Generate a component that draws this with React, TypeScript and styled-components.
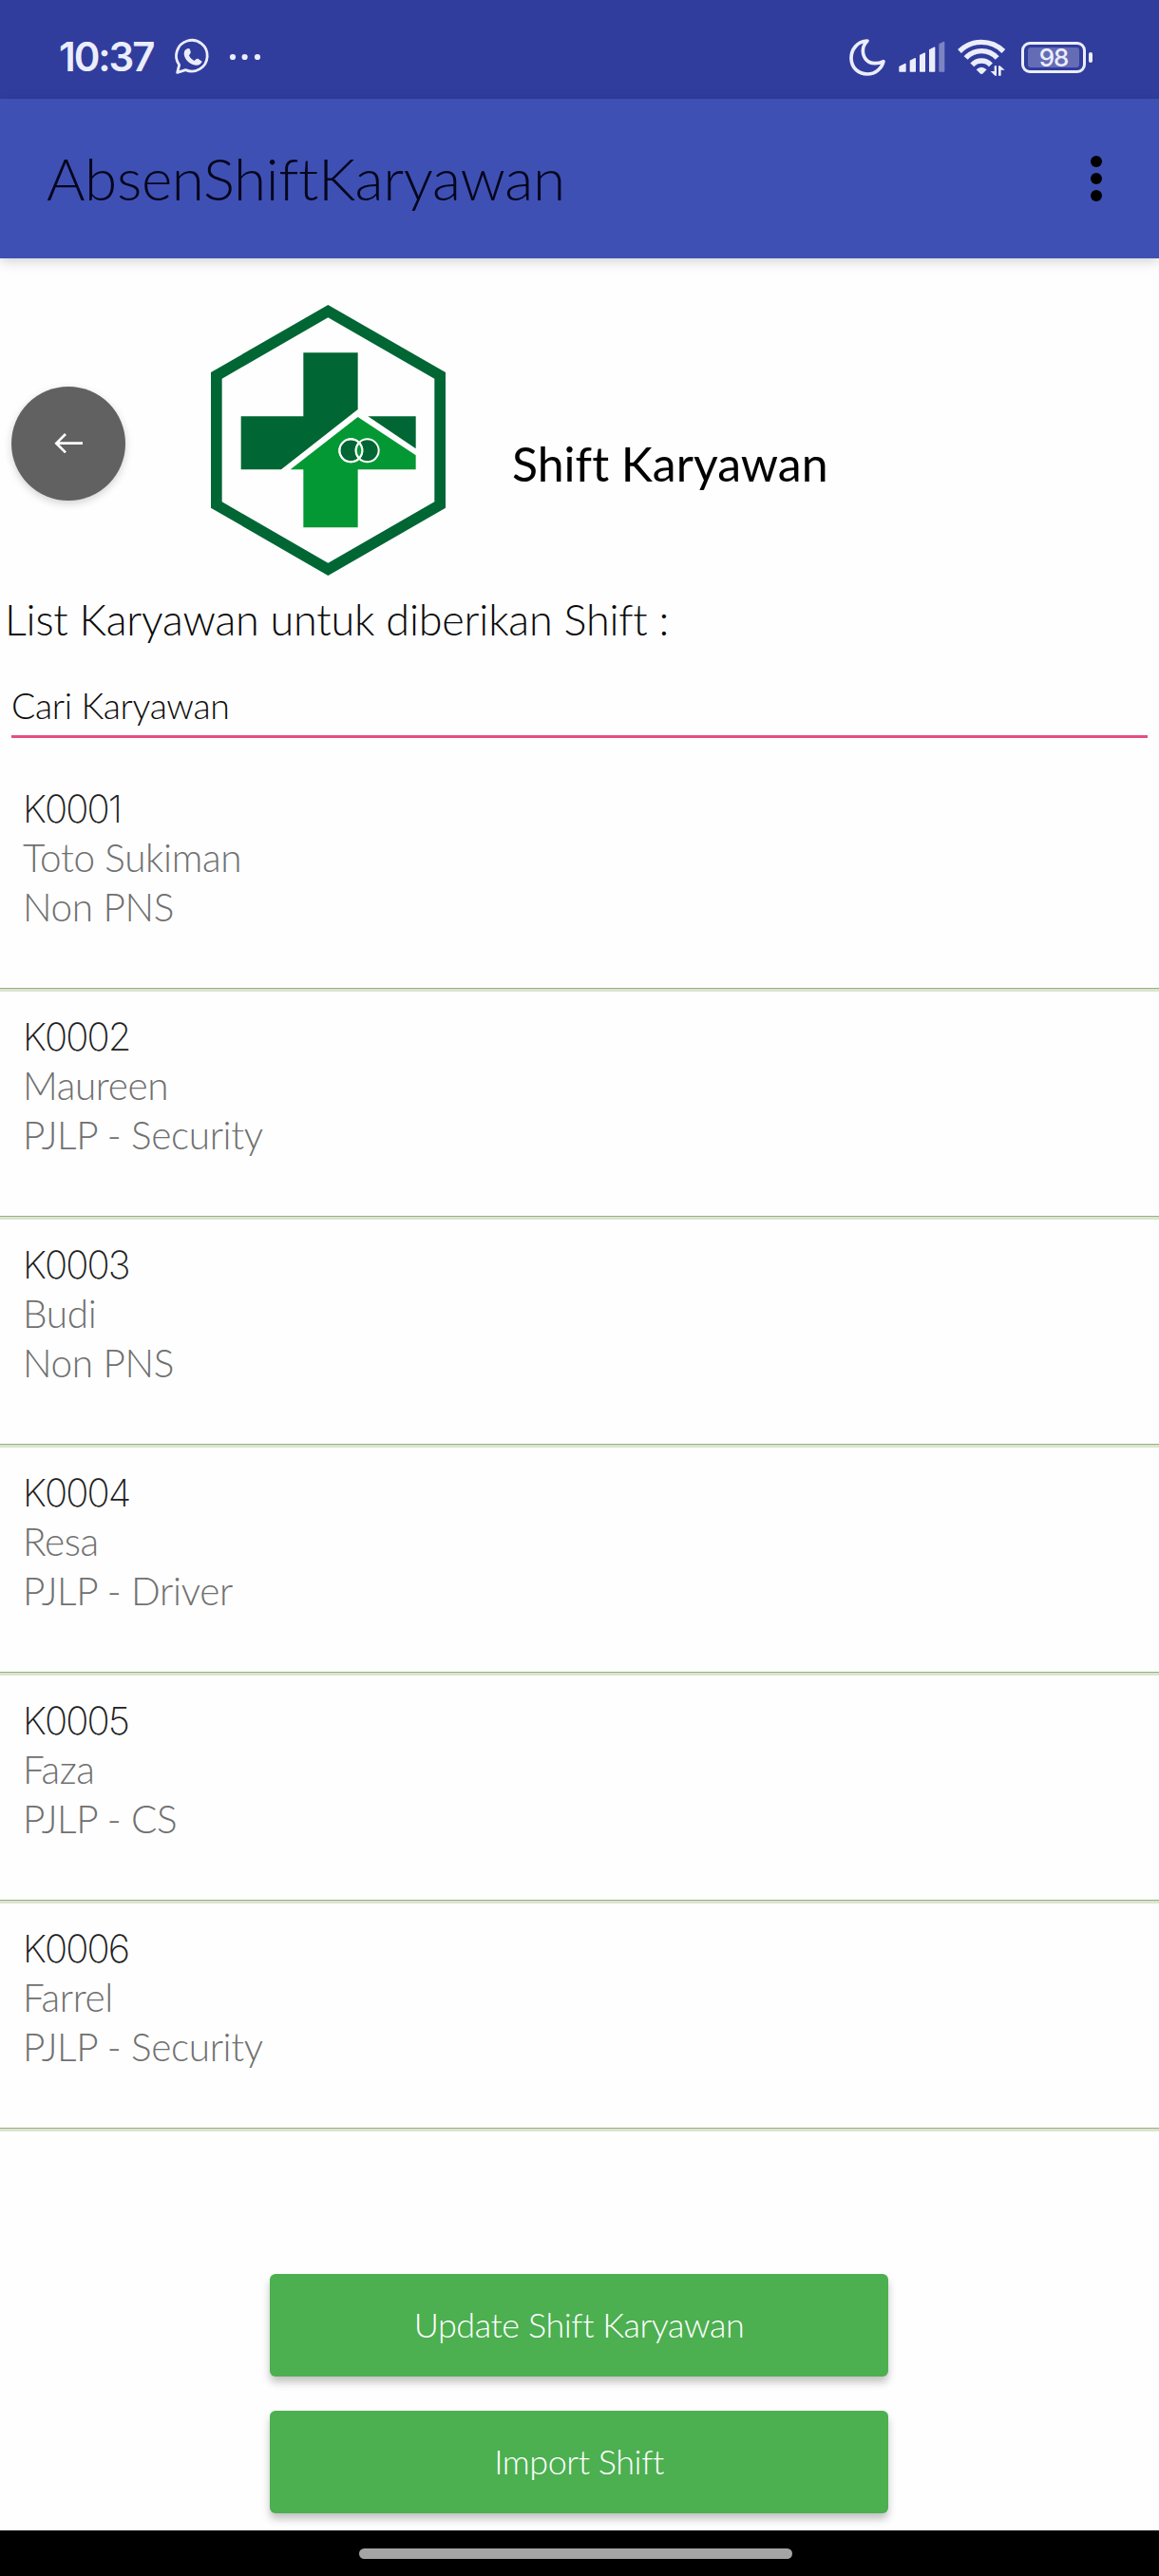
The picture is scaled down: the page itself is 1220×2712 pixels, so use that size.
import React from "react";
import styled, { createGlobalStyle } from "styled-components";

const GlobalStyle = createGlobalStyle`
  *, *::before, *::after { box-sizing: border-box; }
  body {
    margin: 0;
    background: #fefefe;
    font-family: Lato, "Liberation Sans", sans-serif;
    font-variant-ligatures: none;
  }
`;

const Screen = styled.div`
  display: flex;
  flex-direction: column;
  width: 1220px;
  height: 2712px;
  background: #fefefe;
  overflow: hidden;
`;

const StatusBar = styled.header`
  display: flex;
  align-items: center;
  justify-content: space-between;
  flex: none;
  height: 104px;
  padding: 16px 70px 0 62px;
  background: #303d9d;
  color: #ecedfb;
  font-family: Inter, "Liberation Sans", sans-serif;
`;

const StatusGroup = styled.div`
  display: flex;
  align-items: center;
`;

const Clock = styled.span`
  width: 123px;
  font-size: 42px;
  font-weight: 560;
  line-height: 50px;
  letter-spacing: -2.1px;
`;

const Glyph = styled.svg<{ $gap?: number }>`
  display: block;
  flex: none;
  overflow: visible;
  margin-left: ${(p) => p.$gap ?? 0}px;
`;

const Battery = styled.div`
  display: flex;
  align-items: center;
  gap: 3px;
  margin-left: 16px;
`;

const BatteryShell = styled.div`
  display: flex;
  width: 68px;
  height: 33px;
  padding: 3px 4px;
  border: 3px solid #ecedfb;
  border-radius: 9px;
`;

const BatteryLevel = styled.div`
  display: flex;
  align-items: center;
  justify-content: center;
  width: 54px;
  height: 21px;
  border-radius: 3px;
  background: #656cb6;
  font-size: 26px;
  font-weight: 500;
  line-height: 21px;
  letter-spacing: -1px;
`;

const BatteryTip = styled.div`
  width: 4px;
  height: 11px;
  border-radius: 2px;
  background: #ecedfb;
`;

const AppBar = styled.div`
  display: flex;
  align-items: center;
  justify-content: space-between;
  flex: none;
  height: 168px;
  padding: 0 60px 0 49px;
  background: #3f50b4;
  box-shadow: 0 3px 12px rgba(0, 0, 0, 0.18);
`;

const AppTitle = styled.h1`
  margin: 0;
  padding-bottom: 2px;
  color: #04061c;
  font-size: 62px;
  font-weight: 300;
  line-height: 80px;
  letter-spacing: -0.35px;
`;

const Header = styled.section`
  display: flex;
  align-items: center;
  flex: none;
  height: 343px;
  padding: 0 12px;
`;

const BackButton = styled.button`
  display: flex;
  align-items: center;
  justify-content: center;
  width: 120px;
  height: 120px;
  margin: 47px 90px 0 0;
  padding: 0;
  border: 0;
  border-radius: 50%;
  background: #616161;
  box-shadow: 0 3px 8px rgba(0, 0, 0, 0.18);
`;

const LogoFrame = styled.div`
  margin-top: 39px;
`;

const PageTitle = styled.h2`
  margin: 88px 0 0 70px;
  color: #000;
  font-size: 50px;
  font-weight: 400;
  line-height: 60px;
`;

const ListLabel = styled.p`
  flex: none;
  margin: 0;
  padding: 7px 5px;
  height: 81px;
  color: #0a0a0a;
  font-size: 45px;
  font-weight: 300;
  line-height: 60px;
  letter-spacing: -0.2px;
`;

const SearchInput = styled.input`
  flex: none;
  width: 1196px;
  height: 81px;
  margin: 0 12px 27px;
  padding: 14px 0 0;
  border: 0;
  border-bottom: 3px solid #e34f84;
  background: transparent;
  outline: 0;
  color: #0c0c0c;
  font: 300 37.5px/44px Lato, "Liberation Sans", sans-serif;
  letter-spacing: -0.35px;
  &::placeholder {
    color: #0c0c0c;
    opacity: 1;
  }
`;

const List = styled.ul`
  flex: none;
  margin: 0;
  padding: 0;
  list-style: none;
`;

const Item = styled.li`
  display: flex;
  flex-direction: column;
  height: 240px;
  padding: 22px 24px 0;
  border-bottom: 3px solid #dde2d3;
  background: linear-gradient(#93b474, #93b474) bottom / 100% 1px no-repeat padding-box;
`;

const Code = styled.span`
  color: #202020;
  font-family: Inter, "Liberation Sans", sans-serif;
  font-size: 40px;
  font-weight: 250;
  line-height: 51px;
  letter-spacing: -1.9px;
`;

const Detail = styled.span`
  color: #707070;
  font-size: 40.5px;
  font-weight: 300;
  line-height: 52px;
  letter-spacing: -0.35px;
`;

const Actions = styled.div`
  display: flex;
  flex-direction: column;
  align-items: center;
  gap: 36px;
  flex: 1;
  padding: 150px 1px 0 0;
`;

const ActionButton = styled.button`
  width: 651px;
  height: 108px;
  padding: 0 0 2px;
  border: 0;
  border-radius: 6px;
  background: #4caf50;
  box-shadow: 0 6px 8px rgba(0, 0, 0, 0.24);
  color: #fff;
  font: 300 36px/44px Lato, "Liberation Sans", sans-serif;
  letter-spacing: -0.45px;
`;

const NavBar = styled.footer`
  display: flex;
  justify-content: center;
  flex: none;
  height: 48px;
  padding: 19px 8px 0 0;
  background: #000;
  z-index: 1;
`;

const NavPill = styled.div`
  width: 456px;
  height: 11px;
  border-radius: 6px;
  background: #a5a5a5;
`;

const WhatsAppIcon = () => (
  <Glyph width={37} height={38} viewBox="552 125 111 114">
    <path
      d="M557 231 L563 207 A49 49 0 1 1 583 223 Z"
      fill="none"
      stroke="#ecedfb"
      strokeWidth={8.5}
      strokeLinejoin="round"
    />
    <path
      d="M584 158Q578 162 578 172C580 192 600 208 618 208Q630 208 635 196L622 187Q617 186 611 194Q598 188 594 177Q601 171 599 164L595 155Q590 154 584 158Z"
      fill="#ecedfb"
    />
  </Glyph>
);

const MoreNotificationsIcon = () => (
  <Glyph $gap={19} width={34} height={8} viewBox="0 0 34 8">
    {[4, 16.6, 30].map((x) => (
      <circle key={x} cx={x} cy={4} r={3.1} fill="#ecedfb" />
    ))}
  </Glyph>
);

const MoonIcon = () => (
  <Glyph width={38} height={39} viewBox="103 121 114 117">
    <path
      d="M160 127C127 128 109 156 109 181C109 212 132 232 160 232C185 232 206 214 211 192C200 197 190 198 184 198C160 198 146 180 146 158C146 146 151 136 160 127Z"
      fill="none"
      stroke="#ecedfb"
      strokeWidth={11}
      strokeLinejoin="round"
    />
  </Glyph>
);

const bars = [
  { x: 259, w: 22, left: 211, right: 202 },
  { x: 293, w: 19, left: 192, right: 185 },
  { x: 324, w: 18, left: 175, right: 168 },
  { x: 354, w: 19, left: 158, right: 150 },
  { x: 385, w: 18, left: 140, right: 133 },
];

const SignalIcon = () => (
  <Glyph $gap={14} width={49} height={34} viewBox="258 130 147 102">
    {bars.map((b, i) => (
      <path
        key={b.x}
        d={`M${b.x + 2} ${b.left + 1}L${b.x + b.w - 2} ${b.right + 1}V226H${b.x + 2}Z`}
        fill="#ecedfb"
        stroke="#ecedfb"
        strokeWidth={4}
        strokeLinejoin="round"
        opacity={i === 4 ? 0.4 : 1}
      />
    ))}
  </Glyph>
);

const WifiIcon = () => (
  <Glyph $gap={13} width={51} height={39} viewBox="444 122 153 117">
    <g fill="none" stroke="#ecedfb" strokeWidth={16}>
      <path d="M450 161A98 98 0 0 1 589 161" />
      <path d="M470 182A66 66 0 0 1 569 182" />
      <path d="M490 204A40 40 0 0 1 549 204" />
    </g>
    <path d="M503 219Q519 203 536 219L525 230Q519 236 514 230Z" fill="#ecedfb" />
    <path
      d="M560 207H567V238H562L548 224H560ZM573 207H578L593 220H581V238H573Z"
      fill="#ecedfb"
    />
  </Glyph>
);

const OverflowIcon = () => (
  <Glyph width={12} height={48} viewBox="0 0 12 48" fill="#000">
    <circle cx={6} cy={6} r={6} />
    <circle cx={6} cy={24} r={6} />
    <circle cx={6} cy={42} r={6} />
  </Glyph>
);

const ArrowIcon = () => (
  <Glyph width={30} height={22} viewBox="171 469 90 66">
    <path d="M261 501H178M207 472L178 501L207 530" fill="none" stroke="#fff" strokeWidth={8} />
  </Glyph>
);

const Logo = () => (
  <Glyph width={247} height={285} viewBox="666 62 741 855">
    <path
      fillRule="evenodd"
      fill="#006633"
      d="M1036 62L1407 275V703L1036 917L666 703V275ZM1036 102L701 295V684L1036 877L1372 684V295Z"
    />
    <path fill="#006633" d="M958 213H1130V392L888 582H761V414H958Z" />
    <path fill="#006633" d="M1162 414H1313V516Z" />
    <path fill="#039833" d="M1130 416L1313 537V582H1130V765H958V582H917Z" />
    <g fill="#006633" stroke="#fff" strokeWidth={6}>
      <circle cx={1108} cy={522} r={36} />
      <circle cx={1160} cy={522} r={36} />
    </g>
    <circle cx={1108} cy={522} r={36} fill="none" stroke="#fff" strokeWidth={6} />
    <path
      d="M1134 497A36 36 0 0 1 1134 547A36 36 0 0 1 1134 497Z"
      fill="#039833"
      stroke="#fff"
      strokeWidth={6}
    />
  </Glyph>
);

const employees = [
  { code: "K0001", name: "Toto Sukiman", role: "Non PNS" },
  { code: "K0002", name: "Maureen", role: "PJLP - Security" },
  { code: "K0003", name: "Budi", role: "Non PNS" },
  { code: "K0004", name: "Resa", role: "PJLP - Driver" },
  { code: "K0005", name: "Faza", role: "PJLP - CS" },
  { code: "K0006", name: "Farrel", role: "PJLP - Security" },
];

export default function App() {
  return (
    <Screen>
      <GlobalStyle />
      <StatusBar>
        <StatusGroup>
          <Clock>10:37</Clock>
          <WhatsAppIcon />
          <MoreNotificationsIcon />
        </StatusGroup>
        <StatusGroup>
          <MoonIcon />
          <SignalIcon />
          <WifiIcon />
          <Battery>
            <BatteryShell>
              <BatteryLevel>98</BatteryLevel>
            </BatteryShell>
            <BatteryTip />
          </Battery>
        </StatusGroup>
      </StatusBar>
      <AppBar>
        <AppTitle>AbsenShiftKaryawan</AppTitle>
        <OverflowIcon />
      </AppBar>
      <Header>
        <BackButton aria-label="Kembali">
          <ArrowIcon />
        </BackButton>
        <LogoFrame>
          <Logo />
        </LogoFrame>
        <PageTitle>Shift Karyawan</PageTitle>
      </Header>
      <ListLabel>List Karyawan untuk diberikan Shift :</ListLabel>
      <SearchInput placeholder="Cari Karyawan" />
      <List>
        {employees.map((e) => (
          <Item key={e.code}>
            <Code>{e.code}</Code>
            <Detail>{e.name}</Detail>
            <Detail>{e.role}</Detail>
          </Item>
        ))}
      </List>
      <Actions>
        <ActionButton>Update Shift Karyawan</ActionButton>
        <ActionButton>Import Shift</ActionButton>
      </Actions>
      <NavBar>
        <NavPill />
      </NavBar>
    </Screen>
  );
}
